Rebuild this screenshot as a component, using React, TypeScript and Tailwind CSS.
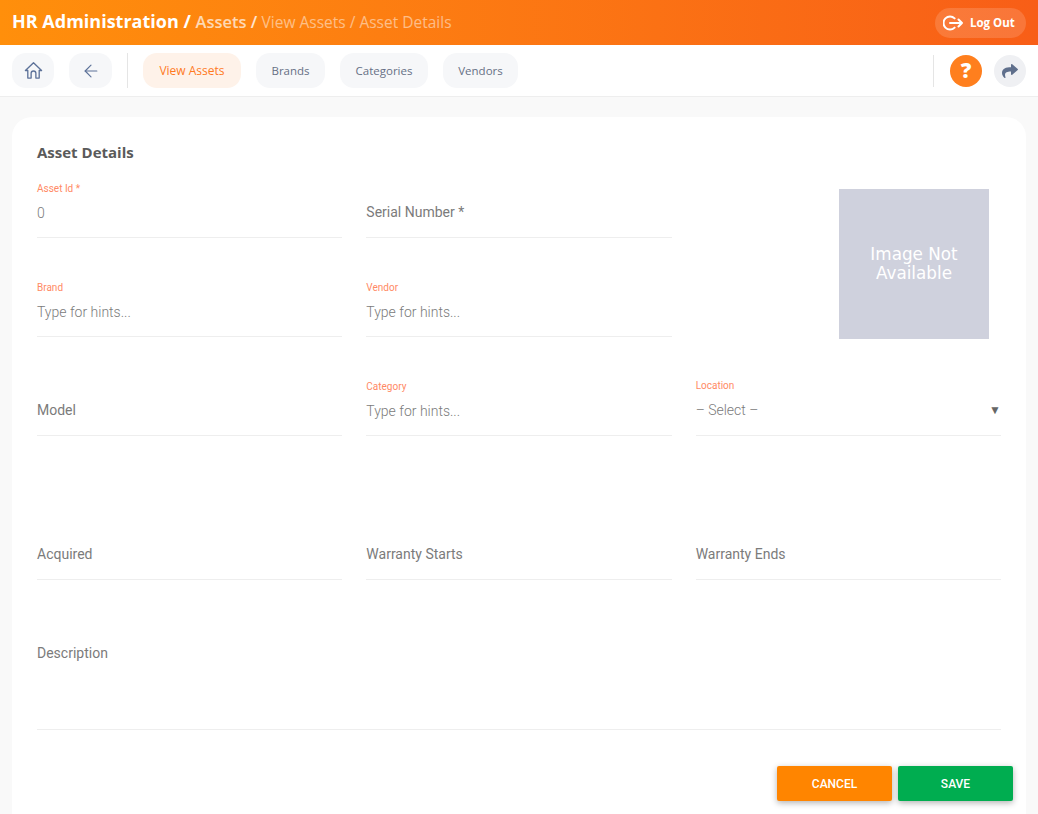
import { ArrowLeft } from "lucide-react";
import { FaShare } from "react-icons/fa";

const tabs = [
  { label: "View Assets", width: "w-[98px]", active: true },
  { label: "Brands", width: "w-[69px]" },
  { label: "Categories", width: "w-[88px]" },
  { label: "Vendors", width: "w-[75px]" },
];

function Field({
  label,
  value,
  big,
  select,
  light,
  raised,
}: {
  label?: string;
  value: string;
  big?: boolean;
  select?: boolean;
  light?: boolean;
  raised?: boolean;
}) {
  return (
    <div className={`relative border-b border-[#eeeeee] ${big ? "h-[126px]" : "h-[75px]"}`}>
      {label && (
        <div className={`absolute left-0 text-[10px] leading-[12px] text-[#ff8a65] ${raised ? "top-[19px]" : "top-[20px]"}`}>
          {label}
        </div>
      )}
      <div
        className={`absolute left-0 text-[14px] leading-[20px] text-[#7b7b7b] ${light ? "font-light" : ""} ${
          label && !raised ? "top-[40px]" : "top-[39px]"
        }`}
      >
        {value}
      </div>
      {select && (
        <div className="absolute right-0 top-[39px] text-[12px] leading-[20px] text-[#666666]">▼</div>
      )}
    </div>
  );
}

export default function App() {
  return (
    <div className="h-[814px] overflow-hidden bg-[#f9f9f9] font-['Roboto',sans-serif]">
      {/* Top bar */}
      <header className="h-[45px] flex items-center justify-between pl-3 pr-3 bg-gradient-to-r from-[#ff8f0b] to-[#f85e17]">
        <div className="font-['Open_Sans',sans-serif] flex items-baseline -mt-[3px] whitespace-nowrap">
          <span className="text-[18px] font-bold text-white">HR Administration /&nbsp;</span>
          <span className="text-[16.5px] font-semibold text-white/70">Assets</span>
          <span className="text-[16.5px] font-semibold text-white/80">&nbsp;/&nbsp;</span>
          <span className="text-[15.5px] font-medium text-white/50">View Assets / Asset Details</span>
        </div>
        <button className="h-[30px] w-[91px] rounded-full bg-white/15 flex items-center pl-2 gap-[7px] font-['Open_Sans',sans-serif] text-[11.5px] font-bold text-white">
          <svg viewBox="0 0 20 20" className="w-5 h-5" fill="none" stroke="white" strokeWidth="2" strokeLinecap="round" strokeLinejoin="round">
            <path d="M11.6 5.4a6.5 6.5 0 1 0 0 9.2" />
            <path d="M7 10h12M15.5 6.5 19 10l-3.5 3.5" />
          </svg>
          Log Out
        </button>
      </header>

      {/* Toolbar */}
      <nav className="h-[52px] bg-white border-b border-[#eeeeee] flex items-center pl-3 pr-3 font-['Open_Sans',sans-serif]">
        <button className="w-[42px] h-[35px] rounded-[14px] bg-[#f6f7f9] flex items-center justify-center">
          <svg viewBox="0 0 20 20" className="w-[19px] h-[19px]" fill="none" stroke="#5d7299" strokeWidth="1.4" strokeLinejoin="round" strokeLinecap="round">
            <path d="M1.5 10 10 1.8 18.5 10H16v8h-3.5v-5a2.5 2.5 0 0 0-5 0v5H4v-8Z" />
          </svg>
        </button>
        <button className="ml-[15px] w-[43px] h-[35px] rounded-[14px] bg-[#f6f7f9] flex items-center justify-center">
          <ArrowLeft className="w-[20px] h-[20px] text-[#5d7299]" strokeWidth={1.4} />
        </button>
        <div className="ml-[15px] mr-[15px] w-px h-[35px] bg-[#e5e5e5]" />
        <div className="flex gap-[15px]">
          {tabs.map((t) => (
            <button
              key={t.label}
              className={`h-[35px] rounded-[14px] font-medium ${t.width} ${
                t.active ? "bg-[#fef2e9] text-[#ff7a1f] text-[12px]" : "bg-[#f6f7f9] text-[#667085] text-[11.5px]"
              }`}
            >
              {t.label}
            </button>
          ))}
        </div>
        <div className="ml-auto h-[32px] w-px bg-[#e5e5e5] mr-4" />
        <div className="w-[32px] h-[32px] rounded-full bg-[#ff7f1e] text-white text-[21px] font-extrabold flex items-center justify-center">
          ?
        </div>
        <div className="ml-3 w-[32px] h-[32px] rounded-full bg-[#eff0f3] flex items-center justify-center">
          <FaShare className="w-[16px] h-[16px] text-[#5f6f8c]" />
        </div>
      </nav>

      {/* Card */}
      <main className="mx-3 mt-5 bg-white rounded-t-[20px] px-[25px] pt-[25px] pb-4 h-[700px]">
        <h2 className="font-['Open_Sans',sans-serif] text-[15px] leading-[21px] font-bold text-[#5a5a5a]">Asset Details</h2>
        <div className="grid grid-cols-3 gap-x-6">
          <div className="col-start-1 row-start-1 mb-[24px]">
            <Field label="Asset Id *" value="0" light />
          </div>
          <div className="col-start-2 row-start-1 mb-[24px]">
            <Field value="Serial Number *" />
          </div>
          <div className="col-start-3 row-start-1 row-span-2 flex justify-end pt-[26px] pr-3">
            <div className="w-[150px] h-[150px] bg-[#cfd1dd] flex items-center justify-center text-center font-['DejaVu_Sans',sans-serif] text-[16.8px] leading-[19px] text-white">
              Image Not
              <br />
              Available
            </div>
          </div>
          <div className="col-start-1 row-start-2 mb-[24px]">
            <Field label="Brand" value="Type for hints..." light />
          </div>
          <div className="col-start-2 row-start-2 mb-[24px]">
            <Field label="Vendor" value="Type for hints..." light />
          </div>
          <div className="mb-[69px]">
            <Field value="Model" />
          </div>
          <div className="mb-[69px]">
            <Field label="Category" value="Type for hints..." light />
          </div>
          <div className="mb-[69px]">
            <Field label="Location" value="– Select –" select raised light />
          </div>
          <div className="mb-[24px]">
            <Field value="Acquired" />
          </div>
          <div className="mb-[24px]">
            <Field value="Warranty Starts" />
          </div>
          <div className="mb-[24px]">
            <Field value="Warranty Ends" />
          </div>
          <div className="col-span-3">
            <Field value="Description" big />
          </div>
        </div>
        <div className="flex justify-end gap-[6px] mt-[36px] -mr-[12px]">
          <button className="w-[115px] h-[35px] rounded-[2px] bg-[#ff8500] text-white text-[12px] font-medium shadow-[0_2px_6px_rgba(0,0,0,0.3)]">
            CANCEL
          </button>
          <button className="w-[115px] h-[35px] rounded-[2px] bg-[#00ad50] text-white text-[12px] font-medium shadow-[0_2px_6px_rgba(0,0,0,0.3)]">
            SAVE
          </button>
        </div>
      </main>
    </div>
  );
}
